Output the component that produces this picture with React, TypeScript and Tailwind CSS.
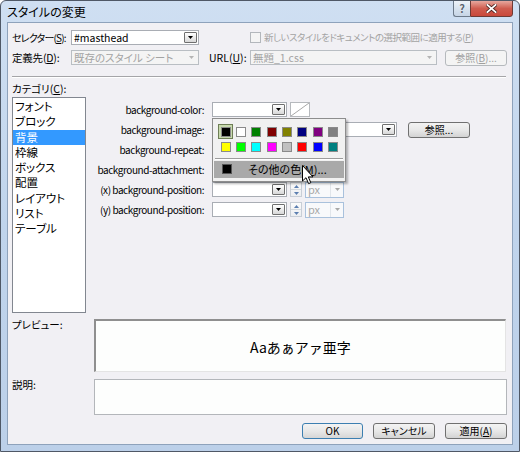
import React from "react";

function DropBtn({ disabled }: { disabled?: boolean }) {
  return (
    <div
      className={
        disabled
          ? "w-[13px] h-[13px] shrink-0 flex items-center justify-center"
          : "w-[13px] h-[11px] shrink-0 mr-[1px] flex items-center justify-center border border-[#6f6f6f] rounded-[1px] bg-gradient-to-b from-white to-[#d8d8d8]"
      }
    >
      <svg width="5" height="3" viewBox="0 0 5 3">
        <path d="M0 0h5L2.5 3z" fill={disabled ? "#b4b4b4" : "#000"} />
      </svg>
    </div>
  );
}

function Combo({
  w,
  text,
  disabled,
}: {
  w: string;
  text?: string;
  disabled?: boolean;
}) {
  return (
    <div
      className={`${w} h-[15px] shrink-0 flex items-center border ${
        disabled ? "border-[#b9bec3] bg-[#f4f4f4] text-[#a3a3a3]" : "border-[#a9adb4] bg-white text-black"
      }`}
    >
      <div className="flex-1 min-w-0 pl-[2px] text-[10.5px] leading-[13px] whitespace-nowrap">
        {text}
      </div>
      <DropBtn disabled={disabled} />
    </div>
  );
}

function WinButton({
  label,
  w,
  disabled,
  primary,
}: {
  label: React.ReactNode;
  w: string;
  disabled?: boolean;
  primary?: boolean;
}) {
  return (
    <div
      className={`${w} h-[16px] shrink-0 rounded-[3px] border flex items-center justify-center text-[10px] leading-[12px] whitespace-nowrap ${
        disabled
          ? "border-[#b5b9bd] bg-[#f4f4f4] text-[#a0a0a0]"
          : primary
          ? "border-[#3c7fb1] bg-gradient-to-b from-[#f3f3f3] via-[#e8e8e8] to-[#d6d6d6] text-black"
          : "border-[#707070] bg-gradient-to-b from-[#f3f3f3] via-[#e8e8e8] to-[#d3d3d3] text-black"
      }`}
    >
      {label}
    </div>
  );
}

const u = (c: string) => <span className="underline">{c}</span>;

const ROW1 = ["#000000", "#ffffff", "#008000", "#800000", "#808000", "#000080", "#800080", "#808080"];
const ROW2 = ["#ffff00", "#00ff00", "#00ffff", "#ff00ff", "#c0c0c0", "#ff0000", "#0000ff", "#008080"];

function ColorPopup() {
  return (
    <div className="absolute left-0 top-[16px] z-10 w-[134px] h-[64px] border border-[#8d8d8d] bg-[#f1f1f1] shadow-[2px_2px_2px_rgba(0,0,0,0.28)]">
      <div className="ml-[5px] mt-[5px] grid grid-cols-[repeat(8,15.33px)] grid-rows-[repeat(2,15.33px)]">
        {[...ROW1, ...ROW2].map((c, i) => (
          <div
            key={i}
            className={`flex items-center justify-center ${
              i === 0 ? "border border-[#6e7e56] bg-[#c7d9ad]" : ""
            }`}
          >
            <div className="w-[10px] h-[10px] border border-[#8a8a8a]" style={{ background: c }} />
          </div>
        ))}
      </div>
      <div className="mx-[2px] mt-[3px] h-[2px] border-t border-[#9c9c9c] border-b border-b-white" />
      <div className="mx-[1px] mt-[1px] h-[17px] bg-[#a9a9a9] flex items-center">
        <div className="ml-[8px] w-[10px] h-[10px] bg-black border border-[#555]" />
        <div className="ml-[16px] text-[11px] leading-[13px] text-black whitespace-nowrap">
          その他の色({u("M")})...
        </div>
      </div>
      <svg
        className="absolute left-[89px] top-[46px]"
        width="13"
        height="20"
        viewBox="0 0 13 20"
      >
        <path
          d="M0.5 0.5 L0.5 16 L4 12.7 L6.6 18.6 L8.8 17.7 L6.3 11.9 L11 11.9 Z"
          fill="#fff"
          stroke="#000"
          strokeWidth="1"
          strokeLinejoin="round"
        />
      </svg>
    </div>
  );
}

function Spinner() {
  return (
    <div className="w-[12px] h-[15px] flex flex-col border border-[#c8ced6] bg-gradient-to-b from-[#fbfbfb] to-[#eceef1]">
      <div className="flex-1 flex items-center justify-center border-b border-[#d4d9df]">
        <svg width="5" height="3" viewBox="0 0 5 3">
          <path d="M0 3h5L2.5 0z" fill="#5c7fb0" />
        </svg>
      </div>
      <div className="flex-1 flex items-center justify-center">
        <svg width="5" height="3" viewBox="0 0 5 3">
          <path d="M0 0h5L2.5 3z" fill="#5c7fb0" />
        </svg>
      </div>
    </div>
  );
}

function UnitCombo() {
  return (
    <div className="w-[39px] h-[16px] flex items-center border border-[#a9c1dc] bg-[#f8f9fb]">
      <div className="flex-1 pl-[2px] text-[11px] leading-[13px] text-[#a8a8a8]">px</div>
      <div className="w-[13px] h-[14px] flex items-center justify-center border-l border-[#e1e5ea]">
        <svg width="5" height="3" viewBox="0 0 5 3">
          <path d="M0 0h5L2.5 3z" fill="#a8a8a8" />
        </svg>
      </div>
    </div>
  );
}

function PropRow({ label, children }: { label: string; children?: React.ReactNode }) {
  return (
    <div className="h-[15px] flex items-center">
      <div className="w-[118px] shrink-0 text-right text-[10px] leading-[13px] tracking-[-0.45px] whitespace-nowrap text-black">
        {label}
      </div>
      <div className="ml-[8px] flex items-center">{children}</div>
    </div>
  );
}

const CATEGORIES = ["フォント", "ブロック", "背景", "枠線", "ボックス", "配置", "レイアウト", "リスト", "テーブル"];

export default function App() {
  return (
    <div className="w-[520px] h-[452px] flex flex-col border border-[#4f5866] rounded-t-[6px] bg-gradient-to-b from-[#cfdff2] via-[#c0d4ec] to-[#bcd0e9] font-['Noto_Sans_CJK_JP','Noto_Sans',sans-serif] [font-feature-settings:'palt'] text-black select-none overflow-hidden">
      {/* title bar */}
      <div className="h-[21px] flex items-start">
        <div className="pl-[6px] pt-[3px] text-[12px] leading-[16px] text-black">スタイルの変更</div>
        <div className="flex-1" />
        <div className="flex mr-[6px] -mt-[1px]">
          <div className="w-[17px] h-[17px] rounded-bl-[3px] border border-[#6d7a8a] border-r-0 bg-gradient-to-b from-[#eef3f9] via-[#d8e3ef] to-[#c7d5e6] flex items-center justify-center">
            <span className="text-[11px] leading-[11px] font-bold text-[#5b6470] [text-shadow:0_0_1px_#fff]">?</span>
          </div>
          <div className="w-[43px] h-[17px] rounded-br-[3px] border border-[#6e3a35] bg-gradient-to-b from-[#e6a79e] via-[#cf5c4f] to-[#c9483b] flex items-center justify-center">
            <svg width="11" height="9" viewBox="0 0 11 9">
              <path d="M1 0.5 L10 8.5 M10 0.5 L1 8.5" stroke="#4a2320" strokeWidth="3.4" strokeLinecap="square" />
              <path d="M1.4 0.9 L9.6 8.1 M9.6 0.9 L1.4 8.1" stroke="#fff" strokeWidth="1.8" strokeLinecap="square" />
            </svg>
          </div>
        </div>
      </div>

      {/* client */}
      <div className="mx-[6px] h-[423px] border border-[#8ea2bb] bg-[#f1f0f4] flex flex-col text-[10.5px]">
        {/* selector row */}
        <div className="mt-[7px] ml-[4px] h-[15px] flex items-center">
          <div className="w-[59px] min-w-0 shrink-0 text-[10px] leading-[13px] whitespace-nowrap tracking-[-0.8px]">
            セレクター({u("S")}):
          </div>
          <Combo w="w-[128px]" text="#masthead" />
          <div className="ml-[51px] shrink-0 w-[11px] h-[11px] border border-[#b3b7bc] bg-[#f4f4f4]" />
          <div className="ml-[3px] text-[9.5px] leading-[13px] text-[#a3a3a3] whitespace-nowrap tracking-[-0.5px]">
            新しいスタイルをドキュメントの選択範囲に適用する({u("P")})
          </div>
        </div>

        {/* define row */}
        <div className="mt-[5px] ml-[4px] h-[15px] flex items-center">
          <div className="w-[59px] min-w-0 shrink-0 leading-[13px] whitespace-nowrap tracking-[-0.2px]">
            定義先({u("D")}):
          </div>
          <Combo w="w-[128px]" text="既存のスタイル シート" disabled />
          <div className="ml-[10px] w-[41px] min-w-0 shrink-0 leading-[13px] whitespace-nowrap">URL({u("U")}):</div>
          <Combo w="w-[187px]" text="無題_1.css" disabled />
          <WinButton w="ml-[8px] w-[62px]" label={<span>参照({u("B")})...</span>} disabled />
        </div>

        {/* separator */}
        <div className="mt-[11px] ml-[4px] w-[494px] h-[2px] border-t border-[#a5a5a8] border-b border-b-white" />

        {/* main */}
        <div className="mt-[4px] h-[231px] flex">
          <div className="ml-[4px] w-[74px] shrink-0 flex flex-col">
            <div className="h-[14px] leading-[14px] whitespace-nowrap">カテゴリ({u("C")}):</div>
            <div className="mt-[1px] h-[216px] border border-[#828790] bg-white pt-[1px]">
              {CATEGORIES.map((c) => (
                <div
                  key={c}
                  className={`h-[15.3px] leading-[15px] pl-[2px] text-[11.5px] ${
                    c === "背景" ? "bg-[#3399ff] text-white" : "text-black"
                  }`}
                >
                  {c}
                </div>
              ))}
            </div>
          </div>

          <div className="pt-[20px] flex flex-col gap-[5px]">
            <PropRow label="background-color:">
              <div className="relative">
                <Combo w="w-[75px]" />
                <ColorPopup />
              </div>
              <div className="ml-[3px] w-[20px] h-[15px] border border-[#b6b9bd] bg-white">
                <svg width="18" height="13" viewBox="0 0 18 13" className="block">
                  <path d="M0 13 L18 0" stroke="#a8a8a8" strokeWidth="1" />
                </svg>
              </div>
            </PropRow>
            <PropRow label="background-image:">
              <Combo w="w-[185px]" />
              <WinButton w="ml-[11px] w-[62px]" label="参照..." />
            </PropRow>
            <PropRow label="background-repeat:">
              <Combo w="w-[75px]" />
            </PropRow>
            <PropRow label="background-attachment:">
              <Combo w="w-[75px]" />
            </PropRow>
            <PropRow label="(x) background-position:">
              <Combo w="w-[75px]" />
              <div className="ml-[3px]">
                <Spinner />
              </div>
              <div className="ml-[3px]">
                <UnitCombo />
              </div>
            </PropRow>
            <PropRow label="(y) background-position:">
              <Combo w="w-[75px]" />
              <div className="ml-[3px]">
                <Spinner />
              </div>
              <div className="ml-[3px]">
                <UnitCombo />
              </div>
            </PropRow>
          </div>
        </div>

        {/* preview */}
        <div className="mt-[6px] ml-[4px] flex items-start">
          <div className="w-[82px] shrink-0 -mt-[1px] leading-[14px] whitespace-nowrap">プレビュー:</div>
          <div className="w-[412px] h-[53px] border-t-2 border-l-2 border-t-[#8f8f8f] border-l-[#8f8f8f] border-r border-b border-r-[#e4e4e4] border-b-[#e4e4e4] bg-[#fdfefd] flex items-center justify-center">
            <span className="text-[14px] leading-[16px] mt-[1px] [font-feature-settings:normal]">Aaあぁアァ亜字</span>
          </div>
        </div>

        {/* description */}
        <div className="mt-[7px] ml-[4px] flex items-start">
          <div className="w-[82px] shrink-0 -mt-[1px] leading-[14px] whitespace-nowrap">説明:</div>
          <div className="w-[413px] h-[36px] border border-[#b3b6ba] bg-[#fdfefd]" />
        </div>

        {/* buttons */}
        <div className="mt-[8px] pr-[5px] flex justify-end gap-[10px]">
          <WinButton w="w-[61px]" label="OK" primary />
          <WinButton w="w-[62px]" label="キャンセル" />
          <WinButton w="w-[62px]" label={<span>適用({u("A")})</span>} />
        </div>
      </div>
    </div>
  );
}
